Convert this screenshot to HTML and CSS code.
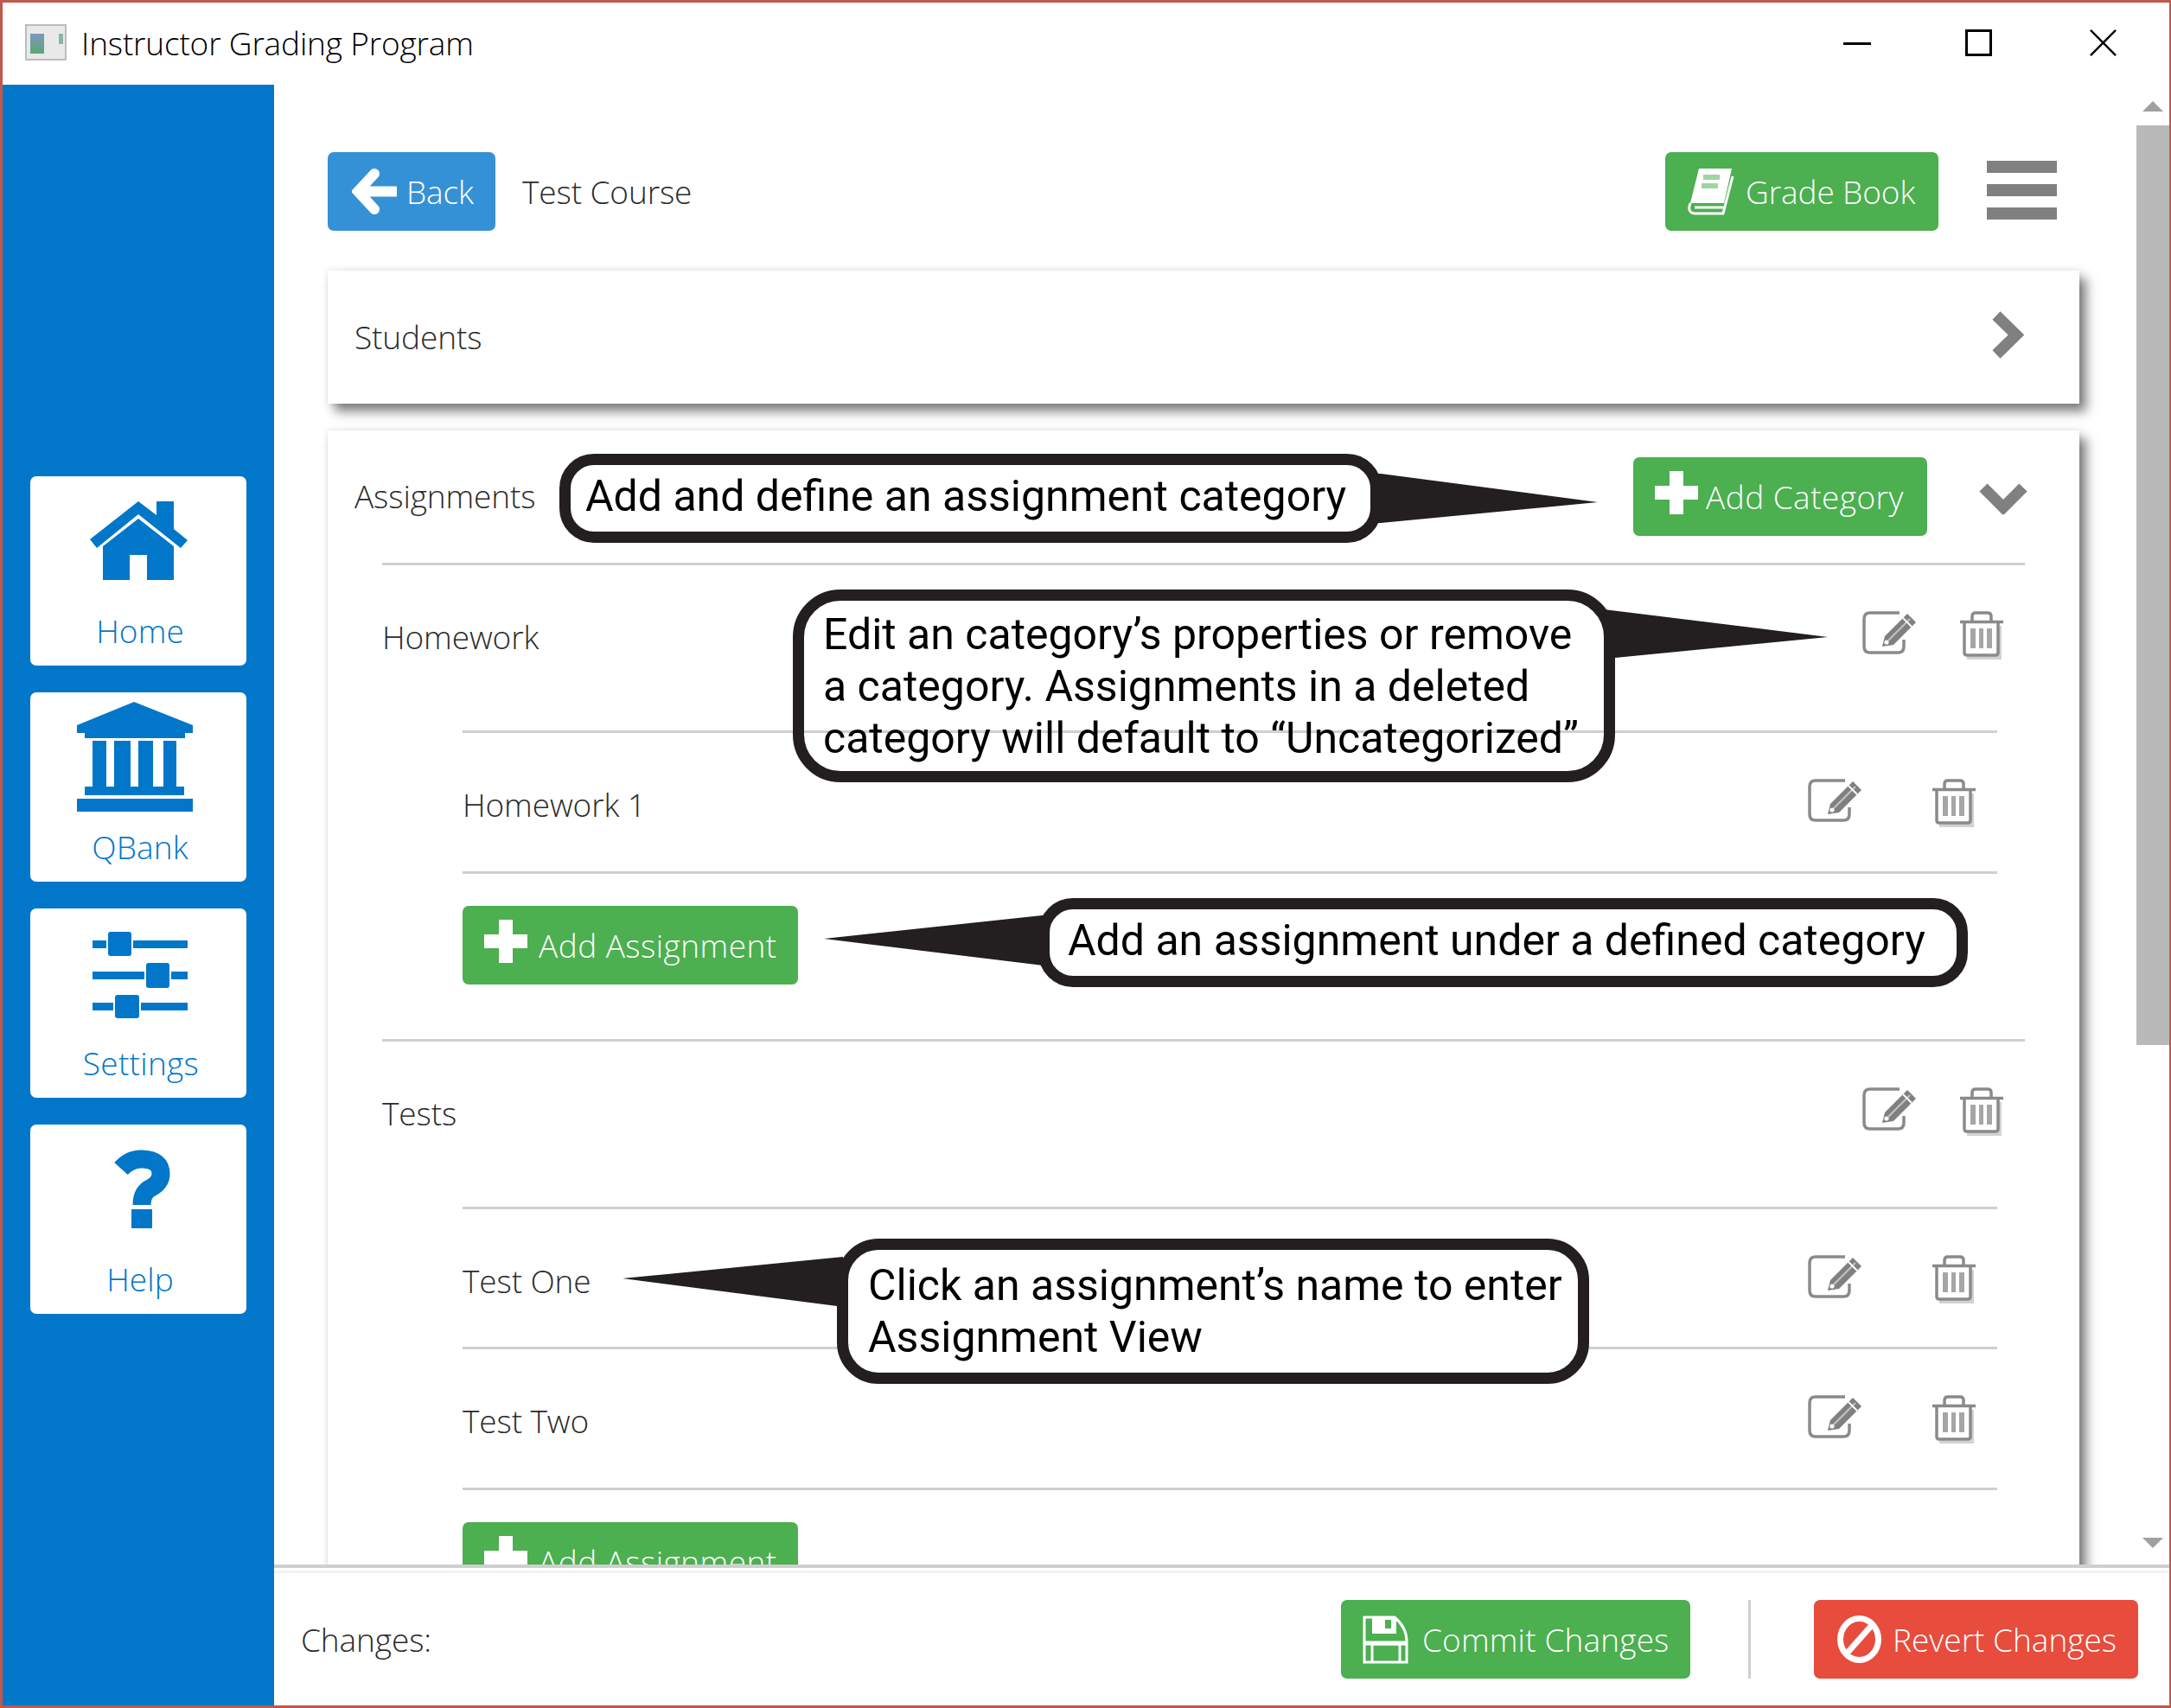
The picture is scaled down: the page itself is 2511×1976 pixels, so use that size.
FILE: index.html
```html
<!DOCTYPE html>
<html>
  <head>
    <meta charset="UTF-8">
    <title>Instructor Grading Program</title>
    <link rel="stylesheet" href="styles.css">
  </head>
  <body>
    <div class="page">
      <div class="window">
        <div class="titlebar">
          <svg class="app-icon" viewBox="0 0 48 42">
            <defs>
              <linearGradient id="pane" x1="0" y1="0" x2="0" y2="1">
                <stop offset="0" stop-color="#7d97bd"/>
                <stop offset="1" stop-color="#5aa874"/>
              </linearGradient>
            </defs>
            <rect x="1" y="1" width="46" height="40" fill="#e9e9e9" stroke="#bcbcc0" stroke-width="2"/>
            <rect x="6" y="11" width="16" height="23" fill="url(#pane)"/>
            <rect x="39" y="11" width="5" height="12" fill="#8db4a0"/>
          </svg>
          <span class="app-title">Instructor Grading Program</span>
          <div class="window-controls">
            <span class="win-min"></span>
            <span class="win-max"></span>
            <svg class="win-close" viewBox="0 0 32 32"><path d="M1 1 L31 31 M31 1 L1 31"/></svg>
          </div>
        </div>

        <div class="app-body">
          <div class="sidebar">
            <div class="nav-card">
              <div class="nav-icon">
                <svg class="icon-home" viewBox="0 0 115 91">
                  <path d="M1 44 L57 0 L78 16 V0 H98 V32 L114 45 L106 54 L57 15 L9 54 Z"/>
                  <path d="M16 52 L57 20 L98 52 V91 H67 V62 H47 V91 H16 Z"/>
                </svg>
              </div>
              <div class="nav-label">Home</div>
            </div>
            <div class="nav-card">
              <div class="nav-icon">
                <svg class="icon-bank" viewBox="0 0 134 127">
                  <path d="M66 0 L134 27 V36 H125 V42 H9 V36 H0 V27 Z"/>
                  <rect x="18" y="45" width="16" height="55"/>
                  <rect x="43" y="45" width="19" height="55"/>
                  <rect x="71" y="45" width="17" height="55"/>
                  <rect x="100" y="45" width="15" height="55"/>
                  <rect x="9" y="98" width="115" height="10"/>
                  <rect x="0" y="112" width="134" height="15"/>
                </svg>
              </div>
              <div class="nav-label">QBank</div>
            </div>
            <div class="nav-card">
              <div class="nav-icon">
                <svg class="icon-sliders" viewBox="0 0 110 100">
                  <rect x="0" y="10" width="16" height="9"/>
                  <rect x="47" y="10" width="63" height="9"/>
                  <rect x="18" y="0" width="27" height="28" rx="3"/>
                  <rect x="0" y="46" width="60" height="9"/>
                  <rect x="91" y="46" width="19" height="9"/>
                  <rect x="62" y="36" width="27" height="29" rx="3"/>
                  <rect x="0" y="82" width="24" height="9"/>
                  <rect x="56" y="82" width="54" height="9"/>
                  <rect x="26" y="73" width="28" height="27" rx="3"/>
                </svg>
              </div>
              <div class="nav-label label-settings">Settings</div>
            </div>
            <div class="nav-card">
              <div class="nav-icon">
                <svg class="icon-help" viewBox="0 0 66 91">
                  <path class="help-curve" d="M8 22 Q19 10 33 11 Q54 12 54 28 Q54 38 43 44 Q32 49 32 64"/>
                  <rect x="20" y="69" width="24" height="22"/>
                </svg>
              </div>
              <div class="nav-label">Help</div>
            </div>
          </div>

          <div class="main">
            <div class="scroll-area">
              <div class="scroll-content">
                <div class="top-row">
                  <div class="btn btn-blue btn-back">
                    <svg class="icon-back" viewBox="0 0 52 53"><path d="M26 6 L7 26.5 L26 47 M9 26.5 H50"/></svg>
                    <span>Back</span>
                  </div>
                  <span class="course-name">Test Course</span>
                  <div class="btn btn-green btn-grade">
                    <svg class="icon-book" viewBox="0 0 59 55">
                      <path class="book-fill" d="M14 1 H52 L43 41 H4 Z"/>
                      <path class="book-cut" d="M19 11 H38 M17 21 H36"/>
                      <path class="book-line" d="M4 41 Q0 52 9 53 H42 L53 10 M9 46 H43"/>
                    </svg>
                    <span>Grade Book</span>
                  </div>
                  <div class="hamburger"><span></span><span></span><span></span></div>
                </div>

                <div class="card card-students">
                  <span class="card-title">Students</span>
                  <svg class="chevron-right" viewBox="0 0 38 57"><path d="M6 6 L29 28.5 L6 51"/></svg>
                </div>

                <div class="card card-assignments">
                  <div class="assignments-head">
                    <span class="card-title">Assignments</span>
                    <div class="btn btn-green btn-category">
                      <svg class="icon-plus" viewBox="0 0 50 50"><path d="M17 0 H33 V17 H50 V33 H33 V50 H17 V33 H0 V17 H17 Z"/></svg>
                      <span>Add Category</span>
                    </div>
                    <svg class="chevron-down" viewBox="0 0 56 37"><path d="M5 6 L28 29 L51 6"/></svg>
                  </div>

                  <div class="category">
                    <div class="category-row">
                      <span class="row-name">Homework</span>
                      <div class="row-actions category-actions">
                        <svg class="icon-edit" viewBox="0 0 63 50"><use href="#edit-shape"/></svg>
                        <svg class="icon-trash" viewBox="0 0 50 56"><use href="#trash-shape"/></svg>
                      </div>
                    </div>
                    <div class="items">
                      <div class="item-row">
                        <span class="row-name">Homework 1</span>
                        <div class="row-actions">
                          <svg class="icon-edit" viewBox="0 0 63 50"><use href="#edit-shape"/></svg>
                          <svg class="icon-trash" viewBox="0 0 50 56"><use href="#trash-shape"/></svg>
                        </div>
                      </div>
                      <div class="add-row">
                        <div class="btn btn-green btn-assignment">
                          <svg class="icon-plus" viewBox="0 0 50 50"><path d="M17 0 H33 V17 H50 V33 H33 V50 H17 V33 H0 V17 H17 Z"/></svg>
                          <span>Add Assignment</span>
                        </div>
                      </div>
                    </div>
                  </div>

                  <div class="category">
                    <div class="category-row">
                      <span class="row-name">Tests</span>
                      <div class="row-actions category-actions">
                        <svg class="icon-edit" viewBox="0 0 63 50"><use href="#edit-shape"/></svg>
                        <svg class="icon-trash" viewBox="0 0 50 56"><use href="#trash-shape"/></svg>
                      </div>
                    </div>
                    <div class="items">
                      <div class="item-row">
                        <span class="row-name">Test One</span>
                        <div class="row-actions">
                          <svg class="icon-edit" viewBox="0 0 63 50"><use href="#edit-shape"/></svg>
                          <svg class="icon-trash" viewBox="0 0 50 56"><use href="#trash-shape"/></svg>
                        </div>
                      </div>
                      <div class="item-row">
                        <span class="row-name">Test Two</span>
                        <div class="row-actions">
                          <svg class="icon-edit" viewBox="0 0 63 50"><use href="#edit-shape"/></svg>
                          <svg class="icon-trash" viewBox="0 0 50 56"><use href="#trash-shape"/></svg>
                        </div>
                      </div>
                      <div class="add-row">
                        <div class="btn btn-green btn-assignment">
                          <svg class="icon-plus" viewBox="0 0 50 50"><path d="M17 0 H33 V17 H50 V33 H33 V50 H17 V33 H0 V17 H17 Z"/></svg>
                          <span>Add Assignment</span>
                        </div>
                      </div>
                    </div>
                  </div>
                </div>
              </div>

              <div class="scrollbar">
                <span class="arrow-up"></span>
                <span class="thumb"></span>
                <span class="arrow-down"></span>
              </div>
            </div>

            <div class="footer">
              <span class="changes-label">Changes:</span>
              <div class="btn btn-green btn-commit">
                <svg class="icon-save" viewBox="0 0 53 56">
                  <path class="save-line" d="M2 2 H37 Q51 14 51 30 V54 H2 Z"/>
                  <path class="save-fill" d="M11 2 H39 V21 H11 Z"/>
                  <path class="save-notch" d="M26 5 H33 V15 H26 Z"/>
                  <path class="save-line" d="M11 54 V33 H43 V54"/>
                  <path class="save-bar" d="M2 32 H51"/>
                </svg>
                <span>Commit Changes</span>
              </div>
              <span class="footer-divider"></span>
              <div class="btn btn-red btn-revert">
                <svg class="icon-ban" viewBox="0 0 51 55">
                  <ellipse cx="25.5" cy="27.5" rx="22" ry="24"/>
                  <path d="M10 45 L41 10"/>
                </svg>
                <span>Revert Changes</span>
              </div>
            </div>
          </div>
        </div>
      </div>

      <!-- annotations laid over the screenshot -->
      <svg class="tails" viewBox="0 0 2511 1976">
        <polygon points="1590,548 1597,548 1848,581 1597,605 1590,605"/>
        <polygon points="1855,705 2114,737 1868,761 1856,761"/>
        <polygon points="1215,1058 953,1086 1215,1118"/>
        <polygon points="975,1454 720,1479 968,1511 985,1511"/>
      </svg>
      <div class="bubble bubble-category">Add and define an assignment category</div>
      <div class="bubble bubble-edit">Edit an category’s properties or remove<br>a category. Assignments in a deleted<br>category will default to “Uncategorized”</div>
      <div class="bubble bubble-assignment">Add an assignment under a defined category</div>
      <div class="bubble bubble-name">Click an assignment’s name to enter<br>Assignment View</div>
    </div>

    <svg class="icon-defs" width="0" height="0">
      <defs>
        <g id="edit-shape">
          <path class="edit-frame" d="M43 2 H9 Q2 2 2 9 V41 Q2 48 9 48 H41 Q48 48 48 41 V33"/>
          <path class="edit-pen" d="M23 41 L26 29 L52 3 L62 13 L36 39 Z"/>
          <path class="edit-stripe" d="M30 34 L55 9"/>
          <path class="edit-gap" d="M47 8 L57 18"/>
          <circle class="edit-hole" cx="28" cy="36" r="2.6"/>
        </g>
        <g id="trash-shape">
          <path class="trash-shade" d="M46 17 V54 H8"/>
          <path class="trash-line" d="M14 12 V6 Q14 2 18 2 H32 Q36 2 36 6 V12 M0 12.5 H50 M5 13 V48 Q5 51 8 51 H41 Q44 51 44 48 V13"/>
          <rect class="trash-bar" x="12" y="20" width="6" height="23"/>
          <rect class="trash-bar" x="22" y="20" width="5" height="23"/>
          <rect class="trash-bar" x="31" y="20" width="6" height="23"/>
        </g>
      </defs>
    </svg>
  </body>
</html>
```

FILE: styles.css
```css
* {
  box-sizing: border-box;
}

body {
  margin: 0;
  background: white;
  font-family: "Open Sans", sans-serif;
  font-weight: 300;
  font-size: 37px;
  letter-spacing: -0.1px;
  color: #2b2b2b;
  overflow: hidden;
}

.page {
  position: relative;
  width: 2511px;
  height: 1976px;
}

.window {
  display: flex;
  flex-direction: column;
  width: 2511px;
  height: 1976px;
  border: 3px solid #c0584c;
  border-right-width: 2px;
  overflow: hidden;
}

/* title bar */
.titlebar {
  display: flex;
  align-items: center;
  height: 95px;
  flex-shrink: 0;
  padding-left: 26px;
}

.app-icon {
  width: 48px;
  height: 42px;
  margin-top: -3px;
}

.app-title {
  margin-left: 17px;
  margin-top: -2px;
  color: black;
  letter-spacing: -0.17px;
}

.window-controls {
  display: flex;
  align-items: center;
  margin-left: auto;
  margin-top: -3px;
  padding-right: 61px;
}

.win-min {
  width: 32px;
  height: 3px;
  background: black;
  margin-right: 109px;
  margin-top: 3px;
}

.win-max {
  width: 31px;
  height: 31px;
  border: 3px solid black;
  margin-right: 113px;
}

.win-close {
  width: 31px;
  height: 31px;
  fill: none;
  stroke: black;
  stroke-width: 2.5;
}

.app-body {
  display: flex;
  flex: 1;
  min-height: 0;
}

/* left navigation */
.sidebar {
  display: flex;
  flex-direction: column;
  align-items: center;
  justify-content: center;
  gap: 31px;
  width: 314px;
  flex-shrink: 0;
  background: #0277c9;
}

.nav-card {
  width: 250px;
  height: 219px;
  border-radius: 7px;
  background: white;
  color: #0277c9;
  text-align: center;
}

.nav-icon {
  display: flex;
  align-items: center;
  justify-content: center;
  height: 148px;
}

.nav-icon svg {
  fill: #0277c9;
}

.icon-home {
  width: 115px;
  height: 91px;
}

.icon-bank {
  width: 134px;
  height: 127px;
  margin-left: -8px;
}

.icon-sliders {
  width: 110px;
  height: 100px;
  margin-top: 6px;
  margin-left: 4px;
}

.icon-help {
  width: 66px;
  height: 91px;
  margin-left: 10px;
}

.help-curve {
  fill: none;
  stroke: #0277c9;
  stroke-width: 21;
}

.nav-label {
  margin-top: 6px;
  padding-left: 4px;
  line-height: 50px;
  letter-spacing: 0.1px;
}

.label-settings {
  padding-left: 6px;
  letter-spacing: 0.3px;
}

/* scrolling part */
.main {
  display: flex;
  flex-direction: column;
  flex: 1;
  min-width: 0;
}

.scroll-area {
  display: flex;
  flex: 1;
  min-height: 0;
  overflow: hidden;
}

.scroll-content {
  flex: 1;
  min-width: 0;
  padding: 78px 66px 0 62px;
}

.top-row {
  display: flex;
  align-items: center;
  margin-bottom: 46px;
}

.btn {
  display: flex;
  align-items: center;
  height: 91px;
  flex-shrink: 0;
  border-radius: 7px;
  color: white;
}

.btn-blue {
  background: #3591d6;
}

.btn-green {
  background: #4caf50;
}

.btn-red {
  background: #e74c3c;
}

.btn-back {
  width: 194px;
  padding-left: 28px;
  gap: 11px;
}

.icon-back {
  width: 52px;
  height: 53px;
  fill: none;
  stroke: white;
  stroke-width: 12;
  stroke-linecap: round;
}

.course-name {
  margin-left: 31px;
  margin-top: -1px;
}

.btn-grade {
  width: 316px;
  margin-left: auto;
  padding-left: 25px;
  gap: 9px;
}

.icon-book {
  width: 59px;
  height: 55px;
}

.book-fill {
  fill: white;
}

.book-cut {
  fill: none;
  stroke: #9fd5a1;
  stroke-width: 6;
}

.book-line {
  fill: none;
  stroke: white;
  stroke-width: 3;
}

.hamburger {
  display: flex;
  flex-direction: column;
  justify-content: space-between;
  width: 81px;
  height: 68px;
  margin: -3px 26px 0 56px;
}

.hamburger span {
  height: 14px;
  background: #808080;
}

.card {
  background: white;
  box-shadow: 8px 9px 12px rgba(0, 0, 0, 0.5), 0 0 7px rgba(0, 0, 0, 0.1);
}

.card-students {
  display: flex;
  align-items: center;
  justify-content: space-between;
  height: 154px;
  margin-bottom: 31px;
  padding: 0 64px 0 31px;
}

.card-title {
  margin-top: -2px;
}

.chevron-right {
  width: 38px;
  height: 57px;
  margin-top: -6px;
  fill: none;
  stroke: #808080;
  stroke-width: 13;
}

.assignments-head {
  display: flex;
  align-items: center;
  height: 153px;
  padding-left: 31px;
}

.btn-category {
  width: 340px;
  margin-left: auto;
  padding-left: 25px;
  gap: 9px;
  letter-spacing: 0.45px;
}

.icon-plus {
  width: 50px;
  height: 50px;
  margin-top: -9px;
  fill: white;
}

.chevron-down {
  width: 56px;
  height: 37px;
  margin: 4px 60px 0 60px;
  fill: none;
  stroke: #808080;
  stroke-width: 13;
}

.category {
  margin: 0 63px;
  border-top: 3px solid #cfcfcf;
}

.category-row {
  display: flex;
  align-items: center;
  justify-content: space-between;
  height: 191px;
  padding-bottom: 29px;
}

.row-actions {
  display: flex;
  align-items: flex-start;
  gap: 81px;
  padding-right: 25px;
}

.category-actions {
  gap: 50px;
}

.items {
  margin: 0 32px 0 93px;
}

.item-row {
  display: flex;
  align-items: center;
  justify-content: space-between;
  height: 162.5px;
  padding-top: 3px;
  border-top: 3px solid #cfcfcf;
}

.row-name {
  margin-top: 3px;
}

.add-row {
  height: 194px;
  padding-top: 37px;
  border-top: 3px solid #cfcfcf;
}

.btn-assignment {
  width: 388px;
  padding-left: 25px;
  gap: 13px;
  letter-spacing: 0.45px;
}

.icon-edit {
  width: 63px;
  height: 50px;
}

.icon-trash {
  width: 50px;
  height: 56px;
}

.edit-frame {
  fill: none;
  stroke: #8a8a8a;
  stroke-width: 3.5;
}

.edit-pen {
  fill: #808080;
}

.edit-stripe {
  fill: none;
  stroke: #c4c4c4;
  stroke-width: 2;
}

.edit-gap {
  fill: none;
  stroke: white;
  stroke-width: 2;
}

.edit-hole {
  fill: white;
}

.trash-shade {
  fill: none;
  stroke: #d2d2d2;
  stroke-width: 4;
}

.trash-line {
  fill: none;
  stroke: #8a8a8a;
  stroke-width: 3.5;
}

.trash-bar {
  fill: #a6a6a6;
}

.scrollbar {
  display: flex;
  flex-direction: column;
  width: 38px;
  flex-shrink: 0;
  align-items: center;
  padding: 19px 0;
}

.arrow-up {
  border-left: 12px solid transparent;
  border-right: 12px solid transparent;
  border-bottom: 12px solid #a0a0a0;
}

.thumb {
  width: 100%;
  height: 1064px;
  margin-top: 16px;
  background: #b9b9b9;
}

.arrow-down {
  margin-top: auto;
  border-left: 12px solid transparent;
  border-right: 12px solid transparent;
  border-top: 12px solid #a0a0a0;
}

/* bottom bar */
.footer {
  display: flex;
  align-items: center;
  height: 163px;
  flex-shrink: 0;
  padding: 6px 36px 0 31px;
  border-top: 4px solid #cfcfcf;
  box-shadow: inset 0 3px 0 white, inset 0 6px 0 #f3f3f3;
}

.changes-label {
  margin-right: auto;
  margin-top: -1px;
}

.btn-commit {
  width: 404px;
  padding-left: 25px;
  gap: 16px;
  letter-spacing: 0.15px;
}

.icon-save {
  width: 53px;
  height: 56px;
}

.save-line {
  fill: none;
  stroke: white;
  stroke-width: 3;
}

.save-fill {
  fill: white;
}

.save-notch {
  fill: #4caf50;
}

.save-bar {
  fill: none;
  stroke: white;
  stroke-width: 5;
}

.footer-divider {
  width: 3px;
  height: 91px;
  margin: 0 73px 0 67px;
  background: #cfcfcf;
}

.btn-revert {
  width: 375px;
  padding-left: 27px;
  gap: 13px;
  letter-spacing: 0;
}

.icon-ban {
  width: 51px;
  height: 55px;
  fill: none;
  stroke: white;
  stroke-width: 7;
}

/* annotations */
.tails {
  position: absolute;
  top: 0;
  left: 0;
  width: 2511px;
  height: 1976px;
  fill: #231f20;
}

.bubble {
  position: absolute;
  display: flex;
  align-items: center;
  border: 13px solid #231f20;
  background: white;
  color: black;
  font-family: Roboto, sans-serif;
  font-weight: 400;
  font-size: 50px;
  letter-spacing: 0;
  line-height: 60px;
  white-space: nowrap;
}

.bubble-category {
  left: 647px;
  top: 525px;
  width: 951px;
  height: 103px;
  padding-left: 17px;
  padding-bottom: 6px;
  border-radius: 40px;
}

.bubble-edit {
  left: 917px;
  top: 682px;
  width: 951px;
  height: 223px;
  padding-left: 22px;
  border-radius: 55px;
  background: transparent;
}

.bubble-assignment {
  left: 1201px;
  top: 1039px;
  width: 1075px;
  height: 103px;
  padding-left: 21px;
  padding-bottom: 5px;
  border-radius: 40px;
}

.bubble-name {
  left: 968px;
  top: 1433px;
  width: 870px;
  height: 168px;
  padding-left: 23px;
  padding-bottom: 1px;
  border-radius: 48px;
}

.icon-defs {
  position: absolute;
}
```
